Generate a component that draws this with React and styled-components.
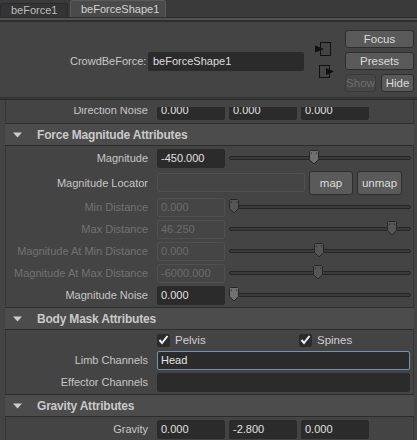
import React from 'react';
import styled, { createGlobalStyle } from 'styled-components';

const GlobalStyle = createGlobalStyle`
  html, body {
    margin: 0;
    padding: 0;
    background: #444444;
  }
  body {
    font-family: "Liberation Sans", Arial, sans-serif;
    font-size: 11px;
    color: #c8c8c8;
    overflow: hidden;
  }
`;

const Page = styled.div`
  width: 417px;
  height: 440px;
  overflow: hidden;
  display: flex;
  flex-direction: column;
  background: #444444;
`;

const TabBar = styled.div`
  height: 17px;
  display: flex;
  align-items: flex-end;
  gap: 2px;
  background: #3a3a3a;
  flex-shrink: 0;
`;

const Tab = styled.div`
  box-sizing: border-box;
  width: ${p => p.$w}px;
  height: ${p => (p.$active ? 17 : 14)}px;
  padding-left: 10px;
  line-height: ${p => (p.$active ? 16 : 13)}px;
  background: ${p => (p.$active ? '#4a4a4a' : '#343434')};
  border: 1px solid ${p => (p.$active ? '#5a5a5a' : '#2b2b2b')};
  border-bottom: none;
  border-radius: 3px 3px 0 0;
  color: ${p => (p.$active ? '#d4d4d4' : '#bdbdbd')};
`;

const TabRule = styled.div`
  box-sizing: border-box;
  height: 5px;
  background: #525252;
  border-top: 1px solid #2c2c2c;
  border-bottom: 2px solid #2e2e2e;
  flex-shrink: 0;
`;

const NodeHeader = styled.div`
  box-sizing: border-box;
  height: 75px;
  padding-top: 3px;
  display: flex;
  align-items: center;
  flex-shrink: 0;
`;

const NameRow = styled.div`
  display: flex;
  align-items: center;
  gap: 5px;
  margin-left: 70px;
`;

const NameLabel = styled.span`
  width: 73px;
  text-align: right;
  color: #c8c8c8;
  white-space: nowrap;
`;

const NameField = styled.div`
  box-sizing: border-box;
  width: 156px;
  height: 19px;
  padding-left: 5px;
  line-height: 19px;
  background: #2b2b2b;
  border-radius: 2px;
  color: #dedede;
`;

const IconStack = styled.div`
  display: flex;
  flex-direction: column;
  gap: 9px;
  margin-left: 10px;
  margin-top: -2px;
`;

const ButtonStack = styled.div`
  width: 69px;
  margin-left: auto;
  margin-right: 3px;
  display: flex;
  flex-direction: column;
  gap: 4px;
`;

const ButtonPair = styled.div`
  display: flex;
  gap: 5px;
`;

const ToolButton = styled.div`
  box-sizing: border-box;
  width: ${p => (p.$w ? `${p.$w}px` : 'auto')};
  flex: ${p => (p.$w ? '0 0 auto' : '1')};
  height: ${p => p.$h || 18}px;
  line-height: ${p => (p.$h || 18) - 2}px;
  text-align: center;
  font-size: 11.5px;
  background: ${p => (p.$disabled ? '#474747' : '#5a5a5a')};
  border: 1px solid ${p => (p.$disabled ? '#3a3a3a' : '#2d2d2d')};
  border-radius: 3px;
  color: ${p => (p.$disabled ? '#6e6e6e' : '#dcdcdc')};
`;

const Divider = styled.div`
  box-sizing: border-box;
  height: 3px;
  background: #393939;
  border-top: 1px solid #333;
  border-bottom: 1px solid #2a2a2a;
  flex-shrink: 0;
`;

const Scroll = styled.div`
  flex: 1;
  overflow: hidden;
  padding: 0 3px 0 5px;
  display: flex;
  flex-direction: column;
`;

const FrameHeader = styled.div`
  box-sizing: border-box;
  height: 23px;
  flex-shrink: 0;
  display: flex;
  align-items: center;
  padding-left: 8px;
  background: #4c4c4c;
  border-top: 1px solid #2c2c2c;
  border-bottom: 1px solid #2c2c2c;
`;

const FrameTitle = styled.span`
  margin-left: 15px;
  font-weight: bold;
  font-size: 12px;
  letter-spacing: -0.2px;
  color: #c9c9c9;
`;

const FrameBody = styled.div`
  flex-shrink: 0;
  padding: ${p => (p.$top ? `${p.$top}px` : '1px')} 0 1px;
  border-left: 1px solid #363636;
  border-right: 1px solid #363636;
`;

const Row = styled.div`
  display: flex;
  align-items: ${p => (p.$clip ? 'flex-end' : 'center')};
  height: ${p => p.$h || 22}px;
  overflow: ${p => (p.$clip ? 'hidden' : 'visible')};
  padding-bottom: ${p => (p.$clip ? '2px' : '0')};
  box-sizing: border-box;
`;

const Label = styled.span`
  width: 142px;
  flex-shrink: 0;
  margin-right: 9px;
  text-align: right;
  white-space: nowrap;
  color: ${p => (p.$dim ? '#727272' : '#c6c6c6')};
  line-height: ${p => (p.$clip ? '19px' : 'normal')};
`;

const FieldGroup = styled.div`
  display: flex;
  gap: 4px;
`;

const fieldColors = {
  on: { bg: '#2b2b2b', border: '#2b2b2b', color: '#e0e0e0' },
  off: { bg: '#454545', border: '#505050', color: '#6c6c6c' },
  focus: { bg: '#2b2b2b', border: '#7393b3', color: '#e6e6e6' },
};

const Field = styled.div`
  box-sizing: border-box;
  width: ${p => (p.$w ? `${p.$w}px` : 'auto')};
  flex: ${p => (p.$w ? '0 0 auto' : '1')};
  margin-right: ${p => (p.$w ? 0 : 3)}px;
  height: 19px;
  padding: 0 3px;
  line-height: 17px;
  border-radius: 2px;
  background: ${p => fieldColors[p.$state || 'on'].bg};
  border: 1px solid ${p => fieldColors[p.$state || 'on'].border};
  color: ${p => fieldColors[p.$state || 'on'].color};
  white-space: nowrap;
  overflow: hidden;
`;

const SliderWrap = styled.div`
  position: relative;
  flex: 1;
  height: 16px;
  margin: 0 2px 0 4px;
  display: flex;
  align-items: center;
`;

const Track = styled.div`
  box-sizing: border-box;
  width: 100%;
  height: 4px;
  background: #3b3b3b;
  border: 1px solid #262626;
  border-radius: 2px;
`;

const Thumb = styled.svg`
  position: absolute;
  top: 0;
  left: calc(${p => p.$pos} * (100% - 10px));
`;

const Pair = styled.div`
  display: flex;
  gap: 4px;
  margin-left: 4px;
`;

const CheckGrid = styled.div`
  display: grid;
  grid-template-columns: 142px auto;
`;

const Check = styled.label`
  display: flex;
  align-items: center;
  gap: 5px;
  color: #cfcfcf;
  font-size: 11.5px;
`;

const Box = styled.span`
  box-sizing: border-box;
  width: 13px;
  height: 13px;
  background: #2b2b2b;
  border-radius: 2px;
  display: flex;
  align-items: center;
  justify-content: center;
`;

const Triangle = () => (
  <svg width="9" height="6" viewBox="0 0 9 6">
    <polygon points="0,0.5 9,0.5 4.5,5.5" fill="#cdcdcd" />
  </svg>
);

const Frame = ({ title }) => (
  <FrameHeader>
    <Triangle />
    <FrameTitle>{title}</FrameTitle>
  </FrameHeader>
);

const Slider = ({ pos, active }) => (
  <SliderWrap>
    <Track />
    <Thumb $pos={pos} width="10" height="15" viewBox="0 0 10 15">
      <path
        d="M1.5 0.5 H8.5 L9.5 1.5 V9.5 L5 14 L0.5 9.5 V1.5 Z"
        fill={active ? '#707070' : '#555555'}
        stroke="#272727"
      />
      <path d="M2.5 2.5 V4 M7.5 2.5 V4" stroke={active ? '#3a3a3a' : '#353535'} />
    </Thumb>
  </SliderWrap>
);

const CheckMark = () => (
  <svg width="11" height="10" viewBox="0 0 11 10">
    <path d="M1.5 5 L4 8 L9.5 1" fill="none" stroke="#f2f2f2" strokeWidth="2" />
  </svg>
);

const SliderRow = ({ label, value, pos, dim }) => (
  <Row>
    <Label $dim={dim}>{label}</Label>
    <Field $w={68} $state={dim ? 'off' : 'on'}>{value}</Field>
    <Slider pos={pos} active={!dim} />
  </Row>
);

const VectorFields = ({ values }) => (
  <FieldGroup>
    {values.map((v, i) => (
      <Field key={i} $w={68}>{v}</Field>
    ))}
  </FieldGroup>
);

const App = () => {
  return (
    <Page>
      <GlobalStyle />
      <TabBar>
        <Tab $w={68}>beForce1</Tab>
        <Tab $w={96} $active>beForceShape1</Tab>
      </TabBar>
      <TabRule />

      <NodeHeader>
        <NameRow>
          <NameLabel>CrowdBeForce:</NameLabel>
          <NameField>beForceShape1</NameField>
        </NameRow>
        <IconStack>
          <svg width="20" height="14" viewBox="0 0 20 14">
            <rect x="6.5" y="0.5" width="10" height="13" fill="none" stroke="#111" />
            <polygon points="1,3.5 10,7 1,10.5" fill="#111" />
          </svg>
          <svg width="20" height="14" viewBox="0 0 20 14">
            <rect x="5.5" y="0.5" width="10" height="12" fill="none" stroke="#111" />
            <polygon points="12,3 20,6.5 12,10" fill="#111" />
          </svg>
        </IconStack>
        <ButtonStack>
          <ToolButton>Focus</ToolButton>
          <ToolButton>Presets</ToolButton>
          <ButtonPair>
            <ToolButton $w={31} $disabled>Show</ToolButton>
            <ToolButton>Hide</ToolButton>
          </ButtonPair>
        </ButtonStack>
      </NodeHeader>
      <Divider />

      <Scroll>
        <FrameBody $top={7}>
          <Row $h={15} $clip>
            <Label $clip>Direction Noise</Label>
            <VectorFields values={['0.000', '0.000', '0.000']} />
          </Row>
        </FrameBody>

        <Frame title="Force Magnitude Attributes" />
        <FrameBody>
          <SliderRow label="Magnitude" value="-450.000" pos={0.465} />
          <Row $h={27}>
            <Label>Magnitude Locator</Label>
            <Field $w={148} $state="off" />
            <Pair>
              <ToolButton $w={44} $h={24}>map</ToolButton>
              <ToolButton $w={45} $h={24}>unmap</ToolButton>
            </Pair>
          </Row>
          <SliderRow label="Min Distance" value="0.000" pos={0} dim />
          <SliderRow label="Max Distance" value="46.250" pos={0.92} dim />
          <SliderRow label="Magnitude At Min Distance" value="0.000" pos={0.495} dim />
          <SliderRow label="Magnitude At Max Distance" value="-6000.000" pos={0.49} dim />
          <SliderRow label="Magnitude Noise" value="0.000" pos={0} />
        </FrameBody>

        <Frame title="Body Mask Attributes" />
        <FrameBody>
          <Row $h={18}>
            <Label />
            <CheckGrid>
              <Check>
                <Box><CheckMark /></Box>
                Pelvis
              </Check>
              <Check>
                <Box><CheckMark /></Box>
                Spines
              </Check>
            </CheckGrid>
          </Row>
          <Row>
            <Label>Limb Channels</Label>
            <Field $state="focus">Head</Field>
          </Row>
          <Row>
            <Label>Effector Channels</Label>
            <Field />
          </Row>
        </FrameBody>

        <Frame title="Gravity Attributes" />
        <FrameBody>
          <Row>
            <Label>Gravity</Label>
            <VectorFields values={['0.000', '-2.800', '0.000']} />
          </Row>
        </FrameBody>
      </Scroll>
    </Page>
  );
};

export default App;
